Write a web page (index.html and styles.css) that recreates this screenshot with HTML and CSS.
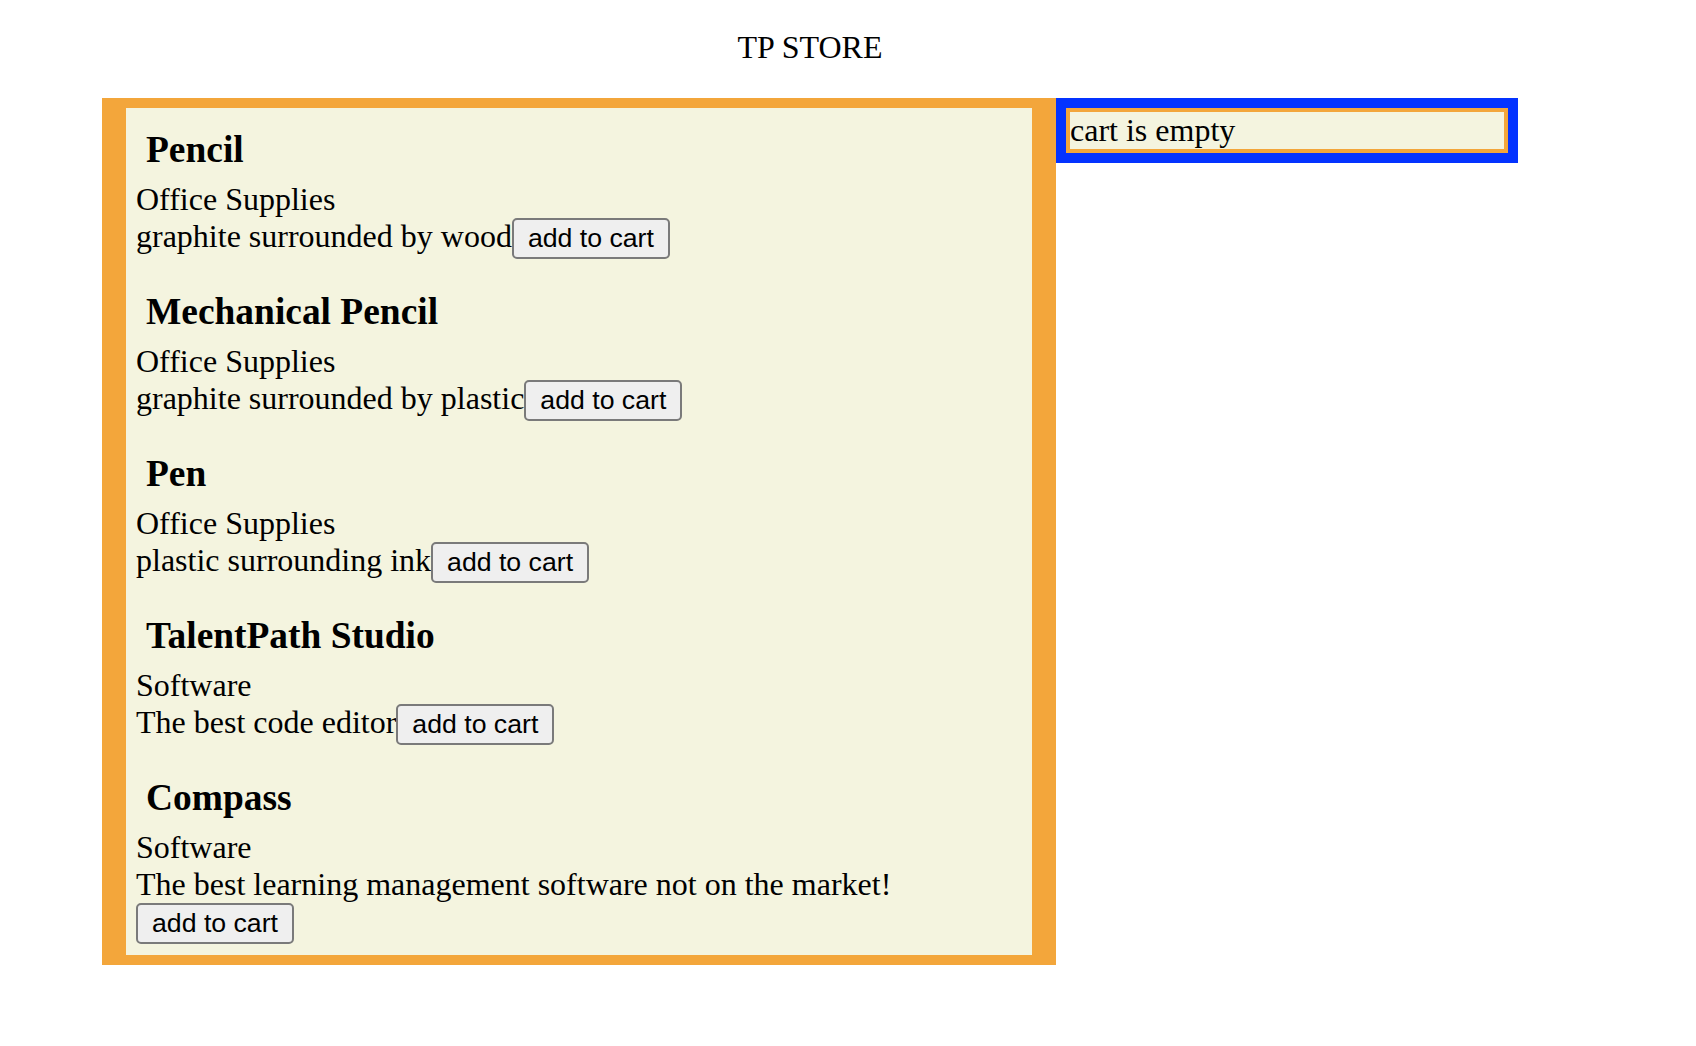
FILE: index.html
```html
<!DOCTYPE html>
<html lang="en">
<head>
<meta charset="utf-8">
<title>TP STORE</title>
<link rel="stylesheet" href="styles.css">
</head>
<body>
<div class="page">
  <div class="title">TP STORE</div>
  <div class="layout">
    <div class="products">
      <div class="product-list">
        <div class="product">
          <h3 class="product-name">Pencil</h3>
          <div class="product-category">Office Supplies</div>
          <div class="product-desc">graphite surrounded by wood<button class="add-btn">add to cart</button></div>
        </div>
        <div class="product">
          <h3 class="product-name">Mechanical Pencil</h3>
          <div class="product-category">Office Supplies</div>
          <div class="product-desc">graphite surrounded by plastic<button class="add-btn">add to cart</button></div>
        </div>
        <div class="product">
          <h3 class="product-name">Pen</h3>
          <div class="product-category">Office Supplies</div>
          <div class="product-desc">plastic surrounding ink<button class="add-btn">add to cart</button></div>
        </div>
        <div class="product">
          <h3 class="product-name">TalentPath Studio</h3>
          <div class="product-category">Software</div>
          <div class="product-desc">The best code editor<button class="add-btn">add to cart</button></div>
        </div>
        <div class="product">
          <h3 class="product-name">Compass</h3>
          <div class="product-category">Software</div>
          <div class="product-desc">The best learning management software not on the market!<button class="add-btn">add to cart</button></div>
        </div>
      </div>
    </div>
    <div class="cart">
      <div class="cart-inner">cart is empty</div>
    </div>
  </div>
</div>
</body>
</html>
```

FILE: styles.css
```css
body {
  margin: 0;
  background: #ffffff;
  color: #000000;
  font-family: "Liberation Serif", "Times New Roman", serif;
  font-size: 32px;
}

.page {
  width: 1416px;
  margin-left: 102px;
  padding-top: 29px;
}

.title {
  text-align: center;
  margin: 0 0 32px;
}

.layout {
  display: flex;
  align-items: flex-start;
}

.products {
  width: 954px;
  box-sizing: border-box;
  background: #f3a63b;
  padding: 10px 24px;
}

.product-list {
  background: #f4f4df;
}

.product {
  padding: 10px 10px 11px;
}

.product-name {
  font-size: 37.44px;
  font-weight: bold;
  margin: 10px 0 10px;
  padding-left: 10px;
}

.add-btn {
  font-family: "Liberation Sans", Arial, Helvetica, sans-serif;
  font-size: 26.67px;
  color: #000000;
  background: #efefef;
  border: 2px solid #7a7a7a;
  border-radius: 5px;
  padding: 3px 14px;
  margin: 0;
}

.cart {
  width: 462px;
  box-sizing: border-box;
  background: #0433ff;
  padding: 10px;
}

.cart-inner {
  border: 4px solid #f3a63b;
  background: #f4f4df;
}
```
